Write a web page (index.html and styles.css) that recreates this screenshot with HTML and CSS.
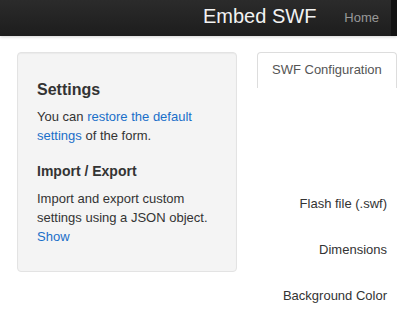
FILE: index.html
```html
<!DOCTYPE html>
<html>
<head>
    <title>Embed SWF</title>
    <link rel="stylesheet" href="styles.css">
</head>
<body>
    <div class="navbar">
        <div class="navbar-inner">
            <a class="brand" href="#">Embed SWF</a>
            <ul class="nav">
                <li><a href="#">Home</a></li>
                <li class="active"><a href="#"></a></li>
            </ul>
        </div>
    </div>

    <div class="container">
        <div class="sidebar">
            <div class="well">
                <h3>Settings</h3>
                <p>You can <a href="#">restore the default settings</a> of the form.</p>
                <h4>Import / Export</h4>
                <p>Import and export custom settings using a JSON object. <a href="#">Show</a></p>
            </div>
        </div>

        <div class="content">
            <ul class="nav-tabs">
                <li class="active"><a href="#">SWF Configuration</a></li>
            </ul>
            <form class="config-form">
                <div class="control-group">
                    <label class="control-label">Flash file (.swf)</label>
                </div>
                <div class="control-group">
                    <label class="control-label">Dimensions</label>
                </div>
                <div class="control-group">
                    <label class="control-label">Background Color</label>
                </div>
            </form>
        </div>
    </div>
</body>
</html>
```

FILE: styles.css
```css
html, body {
    overflow: hidden;
}
body {
    margin: 0;
    font-family: "Liberation Sans", Arial, sans-serif;
    font-size: 13px;
    line-height: 18px;
    color: #333;
    background: #fff;
}
a {
    color: #1a6fc9;
    text-decoration: none;
}

/* top bar */
.navbar {
    height: 36px;
    overflow: hidden;
    background: linear-gradient(#2b2b2b, #1d1d1d);
    box-shadow: 0 1px 3px rgba(0, 0, 0, 0.18);
}
.navbar-inner {
    display: flex;
    padding-left: 183px;
}
.brand {
    display: block;
    padding: 6px 18px 10px 20px;
    font-size: 20px;
    line-height: 20px;
    color: #f2f2f2;
    white-space: nowrap;
}
.nav {
    display: flex;
    margin: 0;
    padding: 0;
    list-style: none;
}
.nav a {
    display: block;
    padding: 9px 12px 9px 10px;
    color: #999;
}
.nav .active a {
    width: 60px;
    height: 18px;
    padding: 9px 10px;
    background: #121212;
}

/* page */
.container {
    display: flex;
    gap: 20px;
    padding: 16px 0 0 17px;
}
.sidebar {
    flex: 0 0 220px;
}
.content {
    flex: 1;
    min-width: 0;
}
.well {
    padding: 19px;
    background: #f4f4f4;
    border: 1px solid #e3e3e3;
    border-radius: 4px;
    box-shadow: inset 0 1px 1px rgba(0, 0, 0, 0.04);
}
.well h3 {
    margin: 8px 0 7px;
    font-size: 16px;
    line-height: 20px;
}
.well h4 {
    margin: 17px 0 9px;
    font-size: 14px;
    line-height: 18px;
}
.well p {
    margin: 0 0 6px;
    line-height: 19px;
}

/* tabs */
.nav-tabs {
    display: flex;
    margin: 0;
    padding: 0;
    list-style: none;
}
.nav-tabs a {
    display: block;
    padding: 8px 14px 9px;
    color: #555;
    white-space: nowrap;
    border: 1px solid #ddd;
    border-bottom: 0;
    border-radius: 4px 4px 0 0;
}

/* form */
.config-form {
    padding-top: 102px;
}
.control-group {
    height: 28px;
    margin-bottom: 18px;
}
.control-label {
    display: block;
    width: 130px;
    padding-top: 5px;
    text-align: right;
}
```
